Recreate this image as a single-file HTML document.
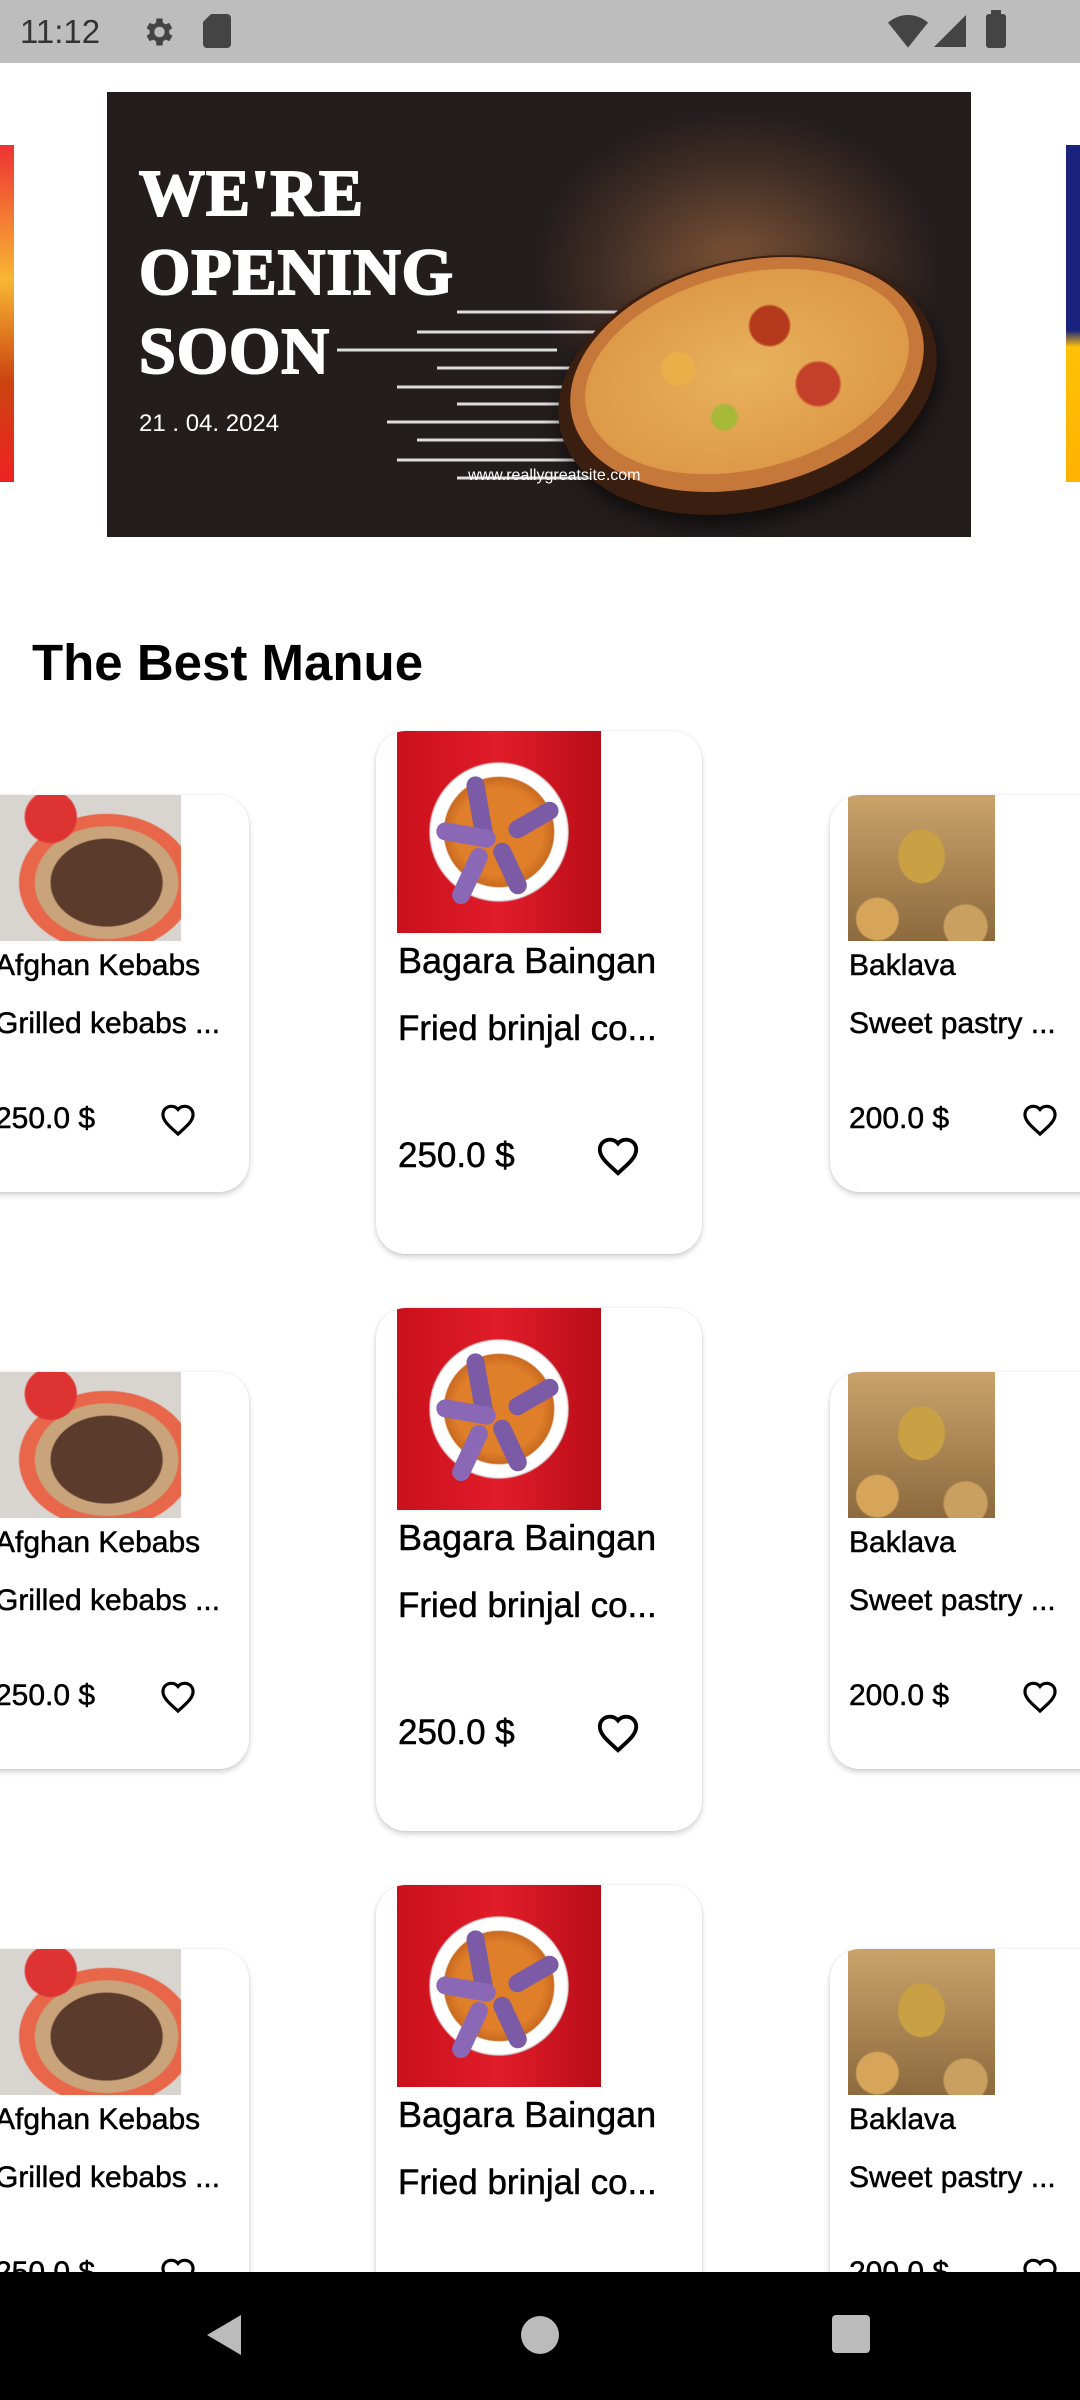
<!DOCTYPE html>
<html><head><meta charset="utf-8"><style>
*{margin:0;padding:0;box-sizing:border-box}
body{width:1080px;height:2400px;position:relative;overflow:hidden;background:#fff;font-family:"Liberation Sans",sans-serif;color:#000}
.abs{position:absolute}
.status{left:0;top:0;width:1080px;height:63px;background:#bdbdbd}
.nav{left:0;top:2272px;width:1080px;height:128px;background:#000}
.row{position:absolute;left:0;width:1080px;height:577px}
.card{position:absolute;background:#fff;border-radius:30px;box-shadow:0 3px 6px rgba(0,0,0,.18),0 0 2px rgba(0,0,0,.08);overflow:hidden}
.t{position:absolute;white-space:nowrap;line-height:1;-webkit-text-stroke:0.5px #000}
.side .n{font-size:30px}
.side .d{font-size:30px}
.side .p{font-size:30px}
.ctr .n{font-size:36px}
.ctr .d{font-size:35px}
.ctr .p{font-size:35px}
</style></head><body>
<div class="abs status"></div>
<div class="t" style="left:20px;top:15px;font-size:33px;color:#333;-webkit-text-stroke:0">11:12</div>
<svg class="abs" style="left:140px;top:14px" width="36" height="36" viewBox="0 0 24 24"><path fill="#444" d="M19.4 13a7.5 7.5 0 0 0 0-2l2.1-1.6-2-3.5-2.5 1a7 7 0 0 0-1.7-1L15 3h-4l-.4 2.9a7 7 0 0 0-1.7 1l-2.5-1-2 3.5L6.5 11a7.5 7.5 0 0 0 0 2l-2.1 1.6 2 3.5 2.5-1a7 7 0 0 0 1.7 1L11 21h4l.4-2.9a7 7 0 0 0 1.7-1l2.5 1 2-3.5zM13 15.5a3.5 3.5 0 1 1 0-7 3.5 3.5 0 0 1 0 7z"/></svg>
<svg class="abs" style="left:203px;top:14px" width="28" height="34" viewBox="0 0 14 17"><path fill="#444" d="M4 0h8a2 2 0 0 1 2 2v13a2 2 0 0 1-2 2H2a2 2 0 0 1-2-2V4z"/></svg>
<svg class="abs" style="left:888px;top:14px" width="40" height="34" viewBox="0 0 24 20"><path fill="#444" d="M12 20L0 5a18 18 0 0 1 24 0z"/></svg>
<svg class="abs" style="left:934px;top:14px" width="32" height="34" viewBox="0 0 20 20"><path fill="#444" d="M20 0v20H0z"/></svg>
<div class="abs" style="left:986px;top:14px;width:20px;height:34px;background:#444;border-radius:3px"></div>
<div class="abs" style="left:991px;top:10px;width:10px;height:5px;background:#444"></div>

<div class="abs" style="left:0;top:145px;width:14px;height:337px;background:linear-gradient(#e33 0,#f7b733 40%,#c41 70%,#e22 100%)"></div>
<div class="abs" style="left:1066px;top:145px;width:14px;height:337px;background:linear-gradient(#1a237e 0,#1a237e 55%,#ffc107 60%,#ffb300 100%)"></div>
<div class="abs" style="left:107px;top:92px;width:864px;height:445px;background:#231d1e;overflow:hidden">
  <div class="abs" style="left:430px;top:20px;width:400px;height:320px;background:radial-gradient(ellipse at 50% 50%,rgba(160,105,65,.75),rgba(110,70,45,.35) 50%,rgba(35,29,30,0) 72%)"></div>
  <svg class="abs" style="left:230px;top:200px" width="300" height="200">
    <g stroke="#fff" stroke-width="3" opacity=".85">
      <line x1="120" y1="20" x2="290" y2="20"/><line x1="80" y1="40" x2="290" y2="40"/><line x1="0" y1="58" x2="220" y2="58"/>
      <line x1="100" y1="76" x2="290" y2="76"/><line x1="60" y1="95" x2="280" y2="95"/><line x1="120" y1="112" x2="260" y2="112"/>
      <line x1="50" y1="130" x2="280" y2="130"/><line x1="80" y1="148" x2="290" y2="148"/><line x1="60" y1="168" x2="290" y2="168"/><line x1="120" y1="186" x2="290" y2="186"/>
    </g>
  </svg>
  <div class="abs" style="left:448px;top:168px;width:385px;height:250px;border-radius:50%;background:#3a1e10;transform:rotate(-14deg);box-shadow:0 10px 20px rgba(0,0,0,.6)"></div>
  <div class="abs" style="left:460px;top:170px;width:360px;height:225px;border-radius:50%;background:#c5783a;transform:rotate(-14deg)"></div>
  <div class="abs" style="left:475px;top:182px;width:330px;height:195px;border-radius:50%;background:radial-gradient(circle at 30% 40%,#e9b04a 0 6%,transparent 7%),radial-gradient(circle at 60% 30%,#b5391d 0 8%,transparent 9%),radial-gradient(circle at 70% 65%,#c4402a 0 8%,transparent 9%),radial-gradient(circle at 40% 70%,#a8b838 0 5%,transparent 6%),radial-gradient(#e8b25c,#d9903f);transform:rotate(-14deg)"></div>
  <div class="t" style="left:32px;top:62px;font-family:'Liberation Serif',serif;font-weight:bold;font-size:66px;color:#fff;line-height:79px;-webkit-text-stroke:2px #fff;letter-spacing:1px">WE'RE<br>OPENING<br>SOON</div>
  <div class="t" style="left:32px;top:320px;font-family:'Liberation Sans Narrow','Liberation Sans',sans-serif;font-size:24px;color:#fff;-webkit-text-stroke:0">21 . 04. 2024</div>
  <div class="t" style="left:361px;top:376px;font-family:'Liberation Sans Narrow','Liberation Sans',sans-serif;font-size:16px;color:#fff;-webkit-text-stroke:0">www.reallygreatsite.com</div>
</div>

<div class="t" style="left:32px;top:637px;font-size:51px;font-weight:bold;-webkit-text-stroke:0">The Best Manue</div>

<div style="position:absolute;left:0;top:0;width:1080px;height:2272px;overflow:hidden">
<div class="row" style="top:0">
  <div class="card side" style="left:-60px;top:795px;width:309px;height:397px">
    <div class="abs" style="left:55px;top:0;width:186px;height:146px;background:radial-gradient(circle at 30% 15%,#d33 0 14%,transparent 15%),radial-gradient(ellipse at 60% 60%,#5a3b2c 0 35%,#c9a37a 36% 45%,#e8664a 46% 55%,transparent 56%),#d8d4cf"></div>
    <div class="t n" style="left:55px;top:156px">Afghan Kebabs</div>
    <div class="t d" style="left:55px;top:214px">Grilled kebabs ...</div>
    <div class="t p" style="left:55px;top:309px">250.0 $</div>
    <svg class="abs" style="left:219px;top:306px" width="38" height="36" viewBox="0 0 24 22"><path d="M12 20.5l-1.3-1.2C5.8 14.9 2.5 11.9 2.5 8.2 2.5 5.2 4.8 3 7.8 3c1.6 0 3.2.8 4.2 2 1-1.2 2.6-2 4.2-2 3 0 5.3 2.2 5.3 5.2 0 3.7-3.3 6.7-8.2 11.1z" fill="none" stroke="#000" stroke-width="2"/></svg>
  </div>
  <div class="card ctr" style="left:376px;top:731px;width:326px;height:523px">
    <div class="abs" style="left:21px;top:0;width:204px;height:202px;background:radial-gradient(circle at 50% 50%,#e07f2a 0 30%,#c96a20 38%,#fff 39% 47%,#ddd 48%,transparent 49%),linear-gradient(90deg,#c8101b,#e11d2a,#b80d18)"></div>
    <div class="abs" style="left:95px;top:45px;width:18px;height:70px;background:#7b5aa6;border-radius:9px;transform:rotate(-10deg)"></div>
    <div class="abs" style="left:60px;top:95px;width:60px;height:18px;background:#8a68b5;border-radius:9px;transform:rotate(10deg)"></div>
    <div class="abs" style="left:130px;top:80px;width:55px;height:18px;background:#7b5aa6;border-radius:9px;transform:rotate(-30deg)"></div>
    <div class="abs" style="left:85px;top:115px;width:18px;height:60px;background:#8a68b5;border-radius:9px;transform:rotate(25deg)"></div>
    <div class="abs" style="left:125px;top:110px;width:18px;height:55px;background:#7b5aa6;border-radius:9px;transform:rotate(-25deg)"></div>
    <div class="t n" style="left:22px;top:212px">Bagara Baingan</div>
    <div class="t d" style="left:22px;top:280px">Fried brinjal co...</div>
    <div class="t p" style="left:22px;top:407px">250.0 $</div>
    <svg class="abs" style="left:219px;top:402px" width="46" height="44" viewBox="0 0 24 22"><path d="M12 20.5l-1.3-1.2C5.8 14.9 2.5 11.9 2.5 8.2 2.5 5.2 4.8 3 7.8 3c1.6 0 3.2.8 4.2 2 1-1.2 2.6-2 4.2-2 3 0 5.3 2.2 5.3 5.2 0 3.7-3.3 6.7-8.2 11.1z" fill="none" stroke="#000" stroke-width="2"/></svg>
  </div>
  <div class="card side" style="left:830px;top:795px;width:300px;height:397px">
    <div class="abs" style="left:18px;top:0;width:147px;height:146px;background:radial-gradient(ellipse at 50% 42%,#c9a043 0 22%,transparent 23%),radial-gradient(circle at 20% 85%,#d6a55a 0 12%,transparent 13%),radial-gradient(circle at 80% 90%,#caa060 0 12%,transparent 13%),linear-gradient(#caa36b,#8c6a3e)"></div>
    <div class="t n" style="left:19px;top:156px">Baklava</div>
    <div class="t d" style="left:19px;top:214px">Sweet pastry ...</div>
    <div class="t p" style="left:19px;top:309px">200.0 $</div>
    <svg class="abs" style="left:191px;top:306px" width="38" height="36" viewBox="0 0 24 22"><path d="M12 20.5l-1.3-1.2C5.8 14.9 2.5 11.9 2.5 8.2 2.5 5.2 4.8 3 7.8 3c1.6 0 3.2.8 4.2 2 1-1.2 2.6-2 4.2-2 3 0 5.3 2.2 5.3 5.2 0 3.7-3.3 6.7-8.2 11.1z" fill="none" stroke="#000" stroke-width="2"/></svg>
  </div>
</div>
</div>
<div class="abs nav"></div>
<svg class="abs" style="left:205px;top:2313px" width="40" height="44" viewBox="0 0 20 22"><path d="M18 1v20L1 11z" fill="#bbb"/></svg>
<div class="abs" style="left:521px;top:2316px;width:38px;height:38px;border-radius:50%;background:#bbb"></div>
<div class="abs" style="left:832px;top:2315px;width:38px;height:38px;border-radius:4px;background:#bbb"></div>
<script>
(function(){
 var r=document.querySelector('.row');
 var p=r.parentNode;
 for(var k=1;k<3;k++){var c=r.cloneNode(true);c.style.top=(577*k)+'px';p.appendChild(c);}
})();
</script>
</body></html>
